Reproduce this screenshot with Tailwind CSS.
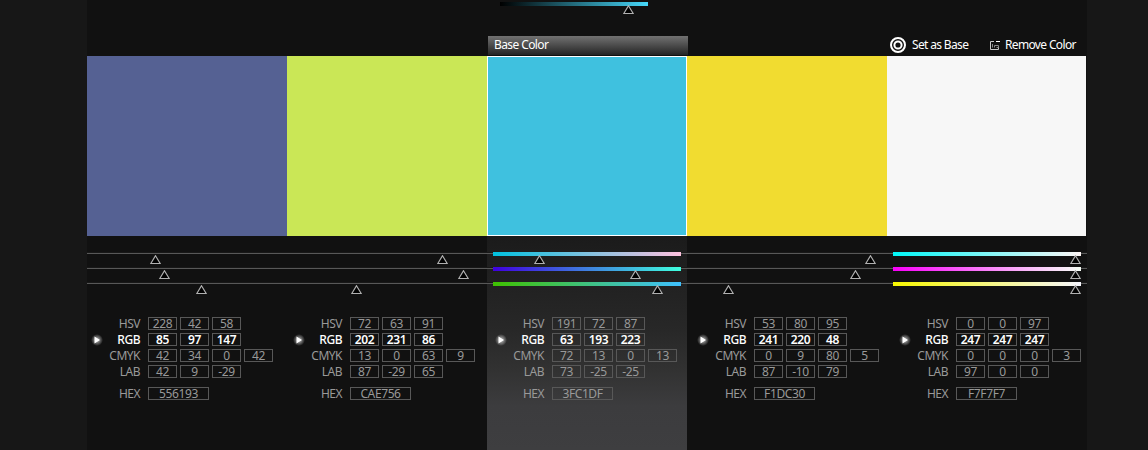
<!DOCTYPE html>
<html lang="en">
<head>
<meta charset="utf-8">
<title>Color theme editor</title>
<script src="https://cdn.jsdelivr.net/npm/@tailwindcss/browser@4"></script>
</head>
<body class="bg-[#171717] h-[450px] overflow-hidden font-['Noto_Sans','Open_Sans',sans-serif]">
<main class="relative ml-[87px] w-[1000px] h-[450px] bg-[#111111] overflow-hidden">
  <div class="absolute left-[400px] top-[236px] w-[200px] h-[214px] bg-[linear-gradient(#1b1b1b_0px,#232323_60px,#282828_95px,#323232_135px,#3c3c3e_170px,#3e3e40_214px)]"></div>
  <header class="relative h-14 pt-0.5">
    <div class="relative ml-[413px] w-[148px] h-1 bg-[linear-gradient(90deg,#000,#46d7f9)]">
      <svg class="absolute top-[3px] left-[123px]" width="11" height="9" viewBox="0 0 11 9"><path d="M5.5 .7 10.2 8.5H.8Z" fill="#000" stroke="#b0b0b0" stroke-width="1.2"/></svg>
    </div>
    <div class="mt-[30px] flex h-[19px]">
      <div class="ml-[401px] w-[200px] pl-[6px] bg-[linear-gradient(#727272,#242424)] text-white text-[12px] leading-[17px] tracking-[-0.6px] whitespace-nowrap">Base Color</div>
      <div class="flex text-white text-[12px] leading-[17px] tracking-[-0.65px] whitespace-nowrap">
        <svg class="ml-[202px] mt-px" width="16" height="16" viewBox="0 0 16 16" fill="none" stroke="#fff"><circle cx="8" cy="8" r="7" stroke-width="2"/><circle cx="8" cy="8" r="3.600" stroke-width="2"/></svg>
        <span class="ml-[6px] w-[56px]">Set as Base</span>
        <svg class="ml-[22px] mt-[5px]" width="11" height="10" viewBox="0 0 11 10" fill="none" stroke="#c8c8c8"><path d="M4 .5H.5v8h8V6"/><path d="M6 .5h4" stroke="#fff"/><path d="M2.500 3v3.500M4.500 6.500v-2h4v2h-2" stroke="#888"/></svg>
        <span class="ml-[4px]">Remove Color</span>
      </div>
    </div>
  </header>
  <section class="relative flex h-[180px]">
    <div class="w-[200px] bg-[#556193]"></div>
    <div class="w-[200px] bg-[#cae756]"></div>
    <div class="w-[200px] bg-[#3fc1df] border border-white"></div>
    <div class="w-[200px] bg-[#f1dc30]"></div>
    <div class="w-[199px] bg-[#f7f7f7]"></div>
  </section>
  <section id="sliders" class="relative pt-4 h-[81px]"></section>
  <section id="values" class="relative flex"></section>
</main>
<script>
const sliders = [
  {marks:[63,350,447,778,983], base:'linear-gradient(90deg,#00c1df,#ffc1df)', last:'linear-gradient(90deg,#00f7f7,#fff7f7)'},
  {marks:[72,371,543,763,983], base:'linear-gradient(90deg,#3f00df,#3fffdf)', last:'linear-gradient(90deg,#f700f7,#f7fff7)'},
  {marks:[109,264,565,636,983], base:'linear-gradient(90deg,#3fc100,#3fc1ff)', last:'linear-gradient(90deg,#f7f700,#f7f7ff)'}
];
document.getElementById('sliders').innerHTML = sliders.map(s => `
  <div class="relative h-[15px]">
    <div class="flex h-1 items-start">
      <div class="w-[406px] h-0.5 border-t border-t-[#181818] border-b border-b-[#585858]"></div>
      <div class="w-[188px] h-1" style="background:${s.base}"></div>
      <div class="w-[212px] h-0.5 border-t border-t-[#181818] border-b border-b-[#585858]"></div>
      <div class="w-[188px] h-1" style="background:${s.last}"></div>
      <div class="w-[6px] h-0.5 border-t border-t-[#181818] border-b border-b-[#585858]"></div>
    </div>
    ${s.marks.map(x => `<svg class="absolute top-[3px]" style="left:${x}px" width="11" height="9" viewBox="0 0 11 9"><path d="M5.500 .7 10.200 8.500H.8Z" fill="#000" stroke="#b0b0b0" stroke-width="1.2"/></svg>`).join('')}
  </div>`).join('');

const colors = [
  [['HSV',228,42,58],['RGB',85,97,147],['CMYK',42,34,0,42],['LAB',42,9,-29],['HEX','556193']],
  [['HSV',72,63,91],['RGB',202,231,86],['CMYK',13,0,63,9],['LAB',87,-29,65],['HEX','CAE756']],
  [['HSV',191,72,87],['RGB',63,193,223],['CMYK',72,13,0,13],['LAB',73,-25,-25],['HEX','3FC1DF']],
  [['HSV',53,80,95],['RGB',241,220,48],['CMYK',0,9,80,5],['LAB',87,-10,79],['HEX','F1DC30']],
  [['HSV',0,0,97],['RGB',247,247,247],['CMYK',0,0,0,3],['LAB',97,0,0],['HEX','F7F7F7']]
];
const tone = k => k === 'RGB' ? 'text-white font-semibold' : 'text-[#999999]';
const labelTone = k => k === 'RGB' ? 'text-white font-medium' : 'text-[#999999]';
document.getElementById('values').innerHTML = colors.map(c => `
  <div class="w-[202px] shrink-0 relative text-[12px] tracking-[-0.4px]">
    <svg class="absolute left-[2px] top-[15px]" width="16" height="16" viewBox="0 0 16 16"><defs><radialGradient id="glow"><stop offset="0" stop-color="#fff" stop-opacity=".75"/><stop offset="1" stop-color="#fff" stop-opacity="0"/></radialGradient></defs><circle cx="8" cy="8" r="6" fill="url(#glow)"/><path d="M5.500 4.500 11 8 5.500 11.500Z" fill="#fff"/></svg>
    ${c.map(([k,...v]) => `<div class="flex h-[13px] ${k === 'HEX' ? 'mt-[9px]' : 'mb-[3px]'}">
      <div class="w-[53px] mr-[8px] text-right leading-[14px] tracking-[-0.5px] ${labelTone(k)}">${k}</div>
      <div class="flex gap-[3px]">${v.map(n => `<div class="h-[13px] border border-[#585858] leading-[12px] text-center ${k === 'HEX' ? 'w-[61px]' : 'w-[29px]'} ${tone(k)}">${n}</div>`).join('')}</div>
    </div>`).join('')}
  </div>`).join('');
</script>
</body>
</html>
